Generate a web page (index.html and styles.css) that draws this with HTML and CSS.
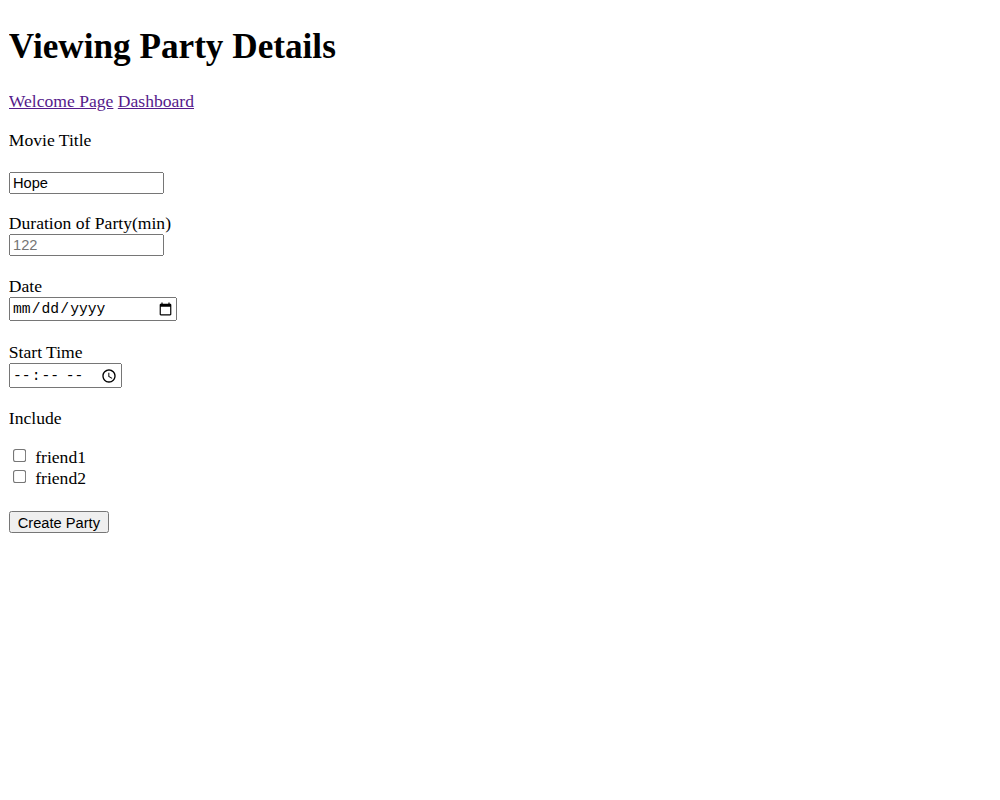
FILE: index.html
```html
<!DOCTYPE html>
<html>
<head>
<meta charset="utf-8">
<title>Viewing Party Details</title>
<link rel="stylesheet" href="styles.css">
</head>
<body>
<h1 class="title">Viewing Party Details</h1>
<p><a href="#" class="link">Welcome Page</a> <a href="#" class="link">Dashboard</a></p>
<form>
<p>Movie Title</p>
<p><input type="text" class="field first" value="Hope"></p>
<p>Duration of Party(min)<br><input type="number" class="field" placeholder="122"></p>
<p>Date<br><input type="date" class="mono date"></p>
<p>Start Time<br><input type="time" class="mono time"></p>
<p>Include</p>
<p class="friends"><input type="checkbox" class="check"> friend1<br><input type="checkbox" class="check"> friend2</p>
<p class="actions"><input type="submit" class="btn" value="Create Party"></p>
</form>
</body>
</html>
```
FILE: styles.css
```css
html { zoom: 1.1; }
body {
  font-family: "Liberation Serif", "Times New Roman", serif;
  font-size: 16px;
  color: #000;
  background: #fff;
}
.title { margin: 17px 0 21.44px; }
.link { color: #551a8b; }
.field, .btn {
  font-family: "Liberation Sans", Arial, sans-serif;
  font-size: 13.333px;
}
.field {
  box-sizing: border-box;
  width: 141px;
  height: 20px;
  margin: 0 0 2px;
}
.field.first { margin-top: 3px; }
.mono {
  box-sizing: border-box;
  font-family: "Liberation Mono", "Courier New", monospace;
  font-size: 13.333px;
  height: 22px;
  margin: 0 0 3px;
}
.date { width: 153px; }
.time { width: 103px; height: 23px; margin-bottom: 2px; }
.check { margin: 2px 3px 1px 4px; }
.friends { line-height: 17.5px; }
.actions { margin-top: 21px; }
.btn {
  box-sizing: border-box;
  width: 91px;
  height: 20px;
  padding: 1px 6px;
}
```
